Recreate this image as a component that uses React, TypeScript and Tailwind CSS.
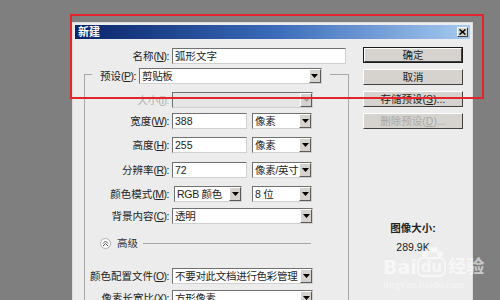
import type { ReactNode } from "react";

const sunken =
  "h-[16px] border border-t-[#707070] border-l-[#707070] border-b-[#d0d0d0] border-r-[#d0d0d0] flex items-center";

function Arrow({ disabled }: { disabled?: boolean }) {
  return (
    <span className="h-[14px] w-[12px] shrink-0 flex items-center justify-center bg-[#d6d3ce] border border-t-white border-l-white border-b-[#5a5a5a] border-r-[#5a5a5a]">
      <svg width="7" height="4" viewBox="0 0 7 4">
        <path d="M0 0h7L3.5 4z" fill={disabled ? "#a0a0a0" : "#000"} />
      </svg>
    </span>
  );
}

function Select({ className, value, disabled }: { className: string; value?: string; disabled?: boolean }) {
  return (
    <div className={`${sunken} ${className} ${disabled ? "bg-[#e6e6e6]" : "bg-white"}`}>
      <span className="flex-1 pl-[2px] tracking-[-0.3px] text-[#222] whitespace-nowrap overflow-hidden">{value}</span>
      <Arrow disabled={disabled} />
    </div>
  );
}

function Input({ className, value }: { className: string; value: string }) {
  return (
    <div className={`${sunken} ${className} bg-white`}>
      <span className="pl-[2px] text-[#222]">{value}</span>
    </div>
  );
}

function Label({ text, k, disabled }: { text: string; k: string; disabled?: boolean }) {
  return (
    <span className={disabled ? "text-[#b0b0b0]" : "text-[#222]"}>
      {text}
      <span className="tracking-[-0.5px]">
        (<span className="underline">{k}</span>):
      </span>
    </span>
  );
}

function Row({ label, mt, children }: { label: ReactNode; mt: string; children: ReactNode }) {
  return (
    <div className={`flex items-center ${mt}`}>
      <div className="w-[87px] pr-[3px] text-right whitespace-nowrap">{label}</div>
      {children}
    </div>
  );
}

function Btn({ children, def, disabled }: { children: ReactNode; def?: boolean; disabled?: boolean }) {
  return (
    <div className={`w-[100px] h-[16px] ${def ? "border border-[#1a1a1a]" : ""}`}>
      <div
        className={`h-full flex items-center justify-center bg-[#d6d3ce] border border-t-white border-l-white border-b-[#404040] border-r-[#404040] ${
          disabled ? "text-[#a8a8a8]" : "text-[#222]"
        }`}
      >
        {children}
      </div>
    </div>
  );
}

export default function App() {
  return (
    <div className="relative w-[500px] h-[300px] overflow-hidden bg-[#7f7f7f] text-[10.5px] leading-[14px] font-['Liberation_Sans','Noto_Sans_CJK_SC',sans-serif]">
      {/* dialog */}
      <div className="ml-[72px] mt-[22px] w-[401px] h-[290px] bg-[#ececec] border border-[#dcdcdc] p-[2px]">
        {/* title bar */}
        <div className="h-[14px] flex items-center justify-between bg-gradient-to-r from-[#0a246a] via-[#3a6ab8] to-[#a6caf0] pl-[3px] pr-[2px]">
          <span className="text-white font-bold text-[11px]">新建</span>
          <span className="w-[11px] h-[10px] flex items-center justify-center bg-[#d6d3ce] border border-t-white border-l-white border-b-[#404040] border-r-[#404040]">
            <svg width="7" height="6" viewBox="0 0 7 6">
              <path d="M0.5 0.5l6 5M6.5 0.5l-6 5" stroke="#000" strokeWidth="1.6" />
            </svg>
          </span>
        </div>

        <div className="flex">
          {/* left column */}
          <div className="w-[288px]">
            <div className="flex items-center mt-[9px]">
              <div className="w-[97px] pr-[3px] text-right">
                <Label text="名称" k="N" />
              </div>
              <Input className="w-[174px]" value="弧形文字" />
            </div>

            <div className="ml-[9px] mt-[10px] w-[265px] h-[240px] border-l border-t border-r border-[#a8a8a8]">
              <div className="flex items-center -mt-[7px] ml-[7px] w-[238px] bg-[#ececec]">
                <span className="pl-[8px] pr-[3px] whitespace-nowrap">
                  <Label text="预设" k="P" />
                </span>
                <Select className="w-[183px]" value="剪贴板" />
              </div>

              <Row mt="mt-[8px]" label={<Label text="大小" k="I" disabled />}>
                <Select className="w-[141px]" disabled />
              </Row>
              <Row mt="mt-[5px]" label={<Label text="宽度" k="W" />}>
                <Input className="w-[75px]" value="388" />
                <Select className="w-[60px] ml-[5px]" value="像素" />
              </Row>
              <Row mt="mt-[8px]" label={<Label text="高度" k="H" />}>
                <Input className="w-[75px]" value="255" />
                <Select className="w-[60px] ml-[5px]" value="像素" />
              </Row>
              <Row mt="mt-[9px]" label={<Label text="分辨率" k="R" />}>
                <Input className="w-[75px]" value="72" />
                <Select className="w-[60px] ml-[5px]" value="像素/英寸" />
              </Row>
              <Row mt="mt-[8px]" label={<Label text="颜色模式" k="M" />}>
                <Select className="w-[68px] ml-[2px]" value="RGB 颜色" />
                <Select className="w-[60px] ml-[10px]" value="8 位" />
              </Row>
              <Row mt="mt-[6px]" label={<Label text="背景内容" k="C" />}>
                <Select className="w-[141px]" value="透明" />
              </Row>

              <div className="flex items-center mt-[13px] ml-[15px] h-[12px]">
                <span className="w-[11px] h-[11px] rounded-full bg-white border border-[#b0b0b0] flex items-center justify-center">
                  <svg width="7" height="7" viewBox="0 0 7 7">
                    <path d="M1 3.5l2.5-2.5 2.5 2.5M1 6l2.5-2.5L6 6" stroke="#555" strokeWidth="1" fill="none" />
                  </svg>
                </span>
                <span className="ml-[6px] text-[#333]">高级</span>
                <span className="ml-[5px] w-[168px] h-px bg-[#a8a8a8]" />
              </div>

              <Row mt="mt-[19px]" label={<Label text="颜色配置文件" k="O" />}>
                <Select className="w-[141px]" value="不要对此文档进行色彩管理" />
              </Row>
              <Row mt="mt-[6px]" label={<Label text="像素长宽比" k="X" />}>
                <Select className="w-[141px]" value="方形像素" />
              </Row>
            </div>
          </div>

          {/* right column */}
          <div className="w-[100px] flex flex-col">
            <div className="mt-[8px] flex flex-col gap-[6px]">
              <Btn def>确定</Btn>
              <Btn>取消</Btn>
              <Btn>
                存储预设(<span className="underline">S</span>)...
              </Btn>
              <Btn disabled>
                删除预设(<span className="underline">D</span>)...
              </Btn>
            </div>
            <div className="mt-[92px] text-center text-[#222] font-bold">图像大小:</div>
            <div className="mt-[5px] text-center text-[#222]">289.9K</div>
          </div>
        </div>
      </div>

      {/* watermark */}
      <div className="absolute left-[383px] top-[247px] text-white/60 flex flex-col items-start">
        <div className="flex items-end font-bold text-[19px] leading-[20px] font-['DejaVu_Sans','Noto_Sans_CJK_SC',sans-serif]">
          <span>Bai</span>
          <span className="relative flex flex-col items-center">
            <svg width="26" height="12" viewBox="0 0 26 12" className="-mb-[2px]">
              <circle cx="6" cy="7" r="3" fill="rgba(255,255,255,0.6)" />
              <circle cx="11" cy="3" r="3" fill="rgba(255,255,255,0.6)" />
              <circle cx="16" cy="3" r="3" fill="rgba(255,255,255,0.6)" />
              <circle cx="21" cy="7" r="3" fill="rgba(255,255,255,0.6)" />
            </svg>
            <span className="px-[2px] rounded-[6px] border-2 border-white/60 text-[15px] leading-[16px]">du</span>
          </span>
          <span className="ml-[2px] text-[18px]">经验</span>
        </div>
        <span className="text-[11px] leading-[12px] mt-[1px] font-['Liberation_Serif',serif] text-white/50">
          jingyan.baidu.com
        </span>
      </div>

      {/* red highlight */}
      <div className="absolute left-[70px] top-[14px] w-[414px] h-[85px] border-2 border-[#e4232b]" />
    </div>
  );
}
